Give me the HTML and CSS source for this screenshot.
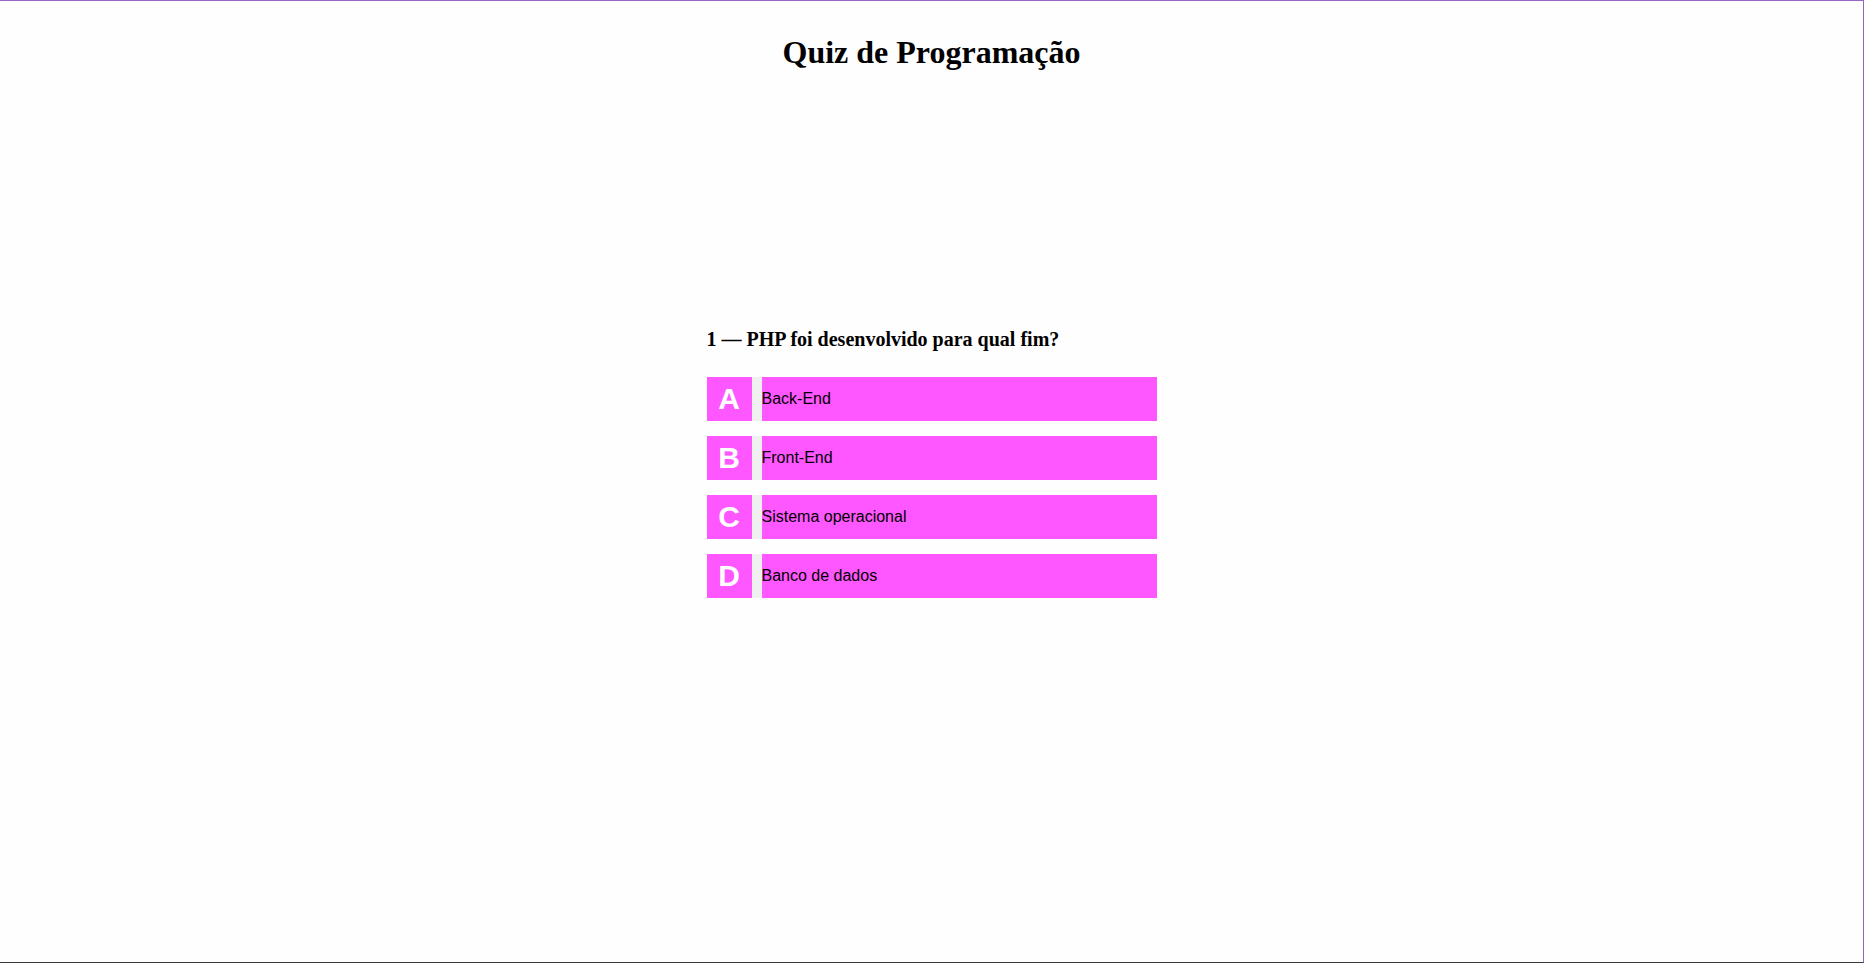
FILE: index.html
```html
<!DOCTYPE html>
<html lang="pt-BR">
<head>
<meta charset="utf-8">
<title>Quiz de Programação</title>
<link rel="stylesheet" href="styles.css">
</head>
<body>
<div class="frame">
  <h1 class="title">Quiz de Programação</h1>
  <main class="quiz">
    <h3 class="question">1 — PHP foi desenvolvido para qual fim?</h3>
    <div class="answers">
      <div class="answer"><span class="letter">A</span><span class="sep"></span><span class="text">Back-End</span></div>
      <div class="answer"><span class="letter">B</span><span class="sep"></span><span class="text">Front-End</span></div>
      <div class="answer"><span class="letter">C</span><span class="sep"></span><span class="text">Sistema operacional</span></div>
      <div class="answer"><span class="letter">D</span><span class="sep"></span><span class="text">Banco de dados</span></div>
    </div>
  </main>
</div>
</body>
</html>
```
FILE: styles.css
```css
html, body {
  margin: 0;
  padding: 0;
  background: #fefefe;
}
.frame {
  box-sizing: border-box;
  height: 963px;
  border-top: 1px solid #9b64c8;
  border-right: 1px solid #9068b8;
  border-bottom: 1px solid #3a3a3a;
  padding: 8px;
  font-family: "Liberation Serif", "Times New Roman", serif;
  color: #000;
  overflow: hidden;
}
.title {
  font-size: 32px;
  font-weight: bold;
  text-align: center;
  margin: 25px 0 0;
}
.quiz {
  width: 450px;
  margin: 0 auto;
  padding-top: 257px;
}
.question {
  font-size: 20px;
  font-weight: bold;
  margin: 0 0 26px;
}
.answers {
  display: flex;
  flex-direction: column;
  gap: 15px;
}
.answer {
  display: flex;
  height: 44px;
  font-family: "Liberation Sans", Arial, sans-serif;
}
.letter {
  width: 45px;
  background: #ff57ff;
  color: #fff;
  font-weight: bold;
  font-size: 30px;
  display: flex;
  align-items: center;
  justify-content: center;
}
.sep {
  width: 10px;
  background: #f0f0f0;
}
.text {
  flex: 1;
  background: #ff57ff;
  color: #000;
  font-size: 16px;
  display: flex;
  align-items: center;
}
```
